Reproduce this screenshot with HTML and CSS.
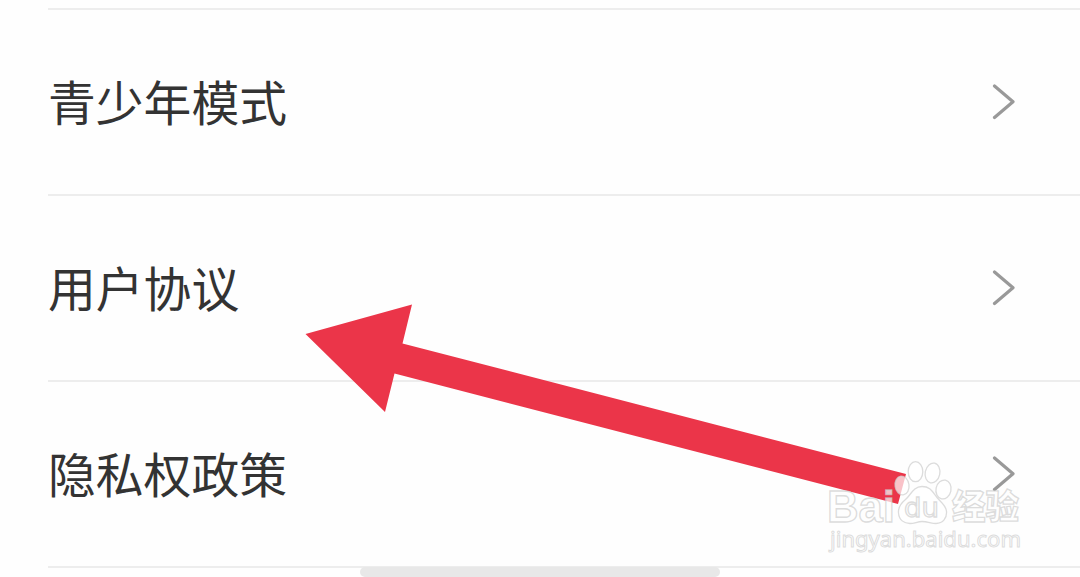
FILE: index.html
```
<!DOCTYPE html>
<html lang="zh-CN">
<head>
<meta charset="utf-8">
<title>设置</title>
<link rel="stylesheet" href="styles.css">
</head>
<body>
<main class="screen">
  <ul class="settings">
    <li class="row"><span class="label">青少年模式</span><svg class="chevron" viewBox="0 0 24 36"><path d="M2.5 2 21 17.8 2.5 33.5"/></svg></li>
    <li class="row"><span class="label">用户协议</span><svg class="chevron" viewBox="0 0 24 36"><path d="M2.5 2 21 17.8 2.5 33.5"/></svg></li>
    <li class="row"><span class="label">隐私权政策</span><svg class="chevron" viewBox="0 0 24 36"><path d="M2.5 2 21 17.8 2.5 33.5"/></svg></li>
  </ul>
  <div class="home-bar"></div>
  <svg class="overlay" viewBox="0 0 1080 577">
    <polygon class="arrow" points="305.5,334 412,304.500 402.500,343.500 906,474 898,504 394.500,373.500 385,412"/>
    <g class="mark">
      <text class="brand" x="827" y="521.500" textLength="68" lengthAdjust="spacingAndGlyphs">Bai</text>
      <ellipse cx="902" cy="485.500" rx="7" ry="9.500" transform="rotate(-8 902 485.500)"/>
      <ellipse cx="915.500" cy="471.700" rx="7.300" ry="10"/>
      <ellipse cx="932.500" cy="473" rx="7.300" ry="10" transform="rotate(12 932.500 473)"/>
      <ellipse cx="943.500" cy="489.500" rx="7.500" ry="9.500" transform="rotate(12 943.500 489.500)"/>
      <path d="M922 486.500C913 486.500 911 495 905.500 499.500C900 504 898 508 898.500 513C899 520 904 523.500 910 523.500C915 523.500 917 521.500 922 521.500C928 521.500 931 523.500 936 523.500C943 523.500 947 518 946.500 511.500C946 505 940.500 502 937 497.500C932 491 930 486.500 922 486.500Z"/>
      <text class="du" x="904" y="517" textLength="35" lengthAdjust="spacingAndGlyphs">du</text>
      <text class="cn" x="952" y="518.500" textLength="67" lengthAdjust="spacingAndGlyphs">经验</text>
      <text class="url" x="830" y="547" textLength="191" lengthAdjust="spacingAndGlyphs">jingyan.baidu.com</text>
    </g>
  </svg>
</main>
</body>
</html>
```
FILE: styles.css
```
body {
  margin: 0;
  background: #fefefe;
  font-family: "Noto Sans CJK SC", sans-serif;
}

.screen {
  position: relative;
  width: 1080px;
  height: 577px;
  overflow: hidden;
}

.settings {
  list-style: none;
  margin: 0;
  padding: 8px 0 0 48px;
}

.row {
  box-sizing: border-box;
  height: 186px;
  border-top: 2px solid #ededed;
  display: flex;
  align-items: center;
  justify-content: space-between;
  padding-right: 64px;
}

.row:last-child {
  height: 188px;
  border-bottom: 2px solid #ededed;
}

.label {
  font-size: 47.8px;
  line-height: 72px;
  color: #333;
  padding-bottom: 3px;
}

.chevron {
  width: 24px;
  height: 36px;
}

.chevron path {
  fill: none;
  stroke: #999;
  stroke-width: 3.2;
  stroke-linecap: round;
  stroke-linejoin: round;
}

.home-bar {
  position: absolute;
  left: 360px;
  top: 567px;
  width: 360px;
  height: 10px;
  border-radius: 5px;
  background: #e8e8e8;
}

.overlay {
  position: absolute;
  inset: 0;
  width: 1080px;
  height: 577px;
}

.arrow {
  fill: #eb3549;
}

.mark {
  fill: rgba(255, 255, 255, 0.7);
  stroke: rgba(205, 205, 205, 0.7);
  stroke-width: 1.3;
}

.brand {
  font: bold 44px "Liberation Sans", sans-serif;
}

.du {
  font: 26px "DejaVu Sans", sans-serif;
}

.cn {
  font: 900 34px "Noto Sans CJK SC", sans-serif;
}

.url {
  font: 22px "Noto Sans", sans-serif;
  stroke-width: 1;
}
```
